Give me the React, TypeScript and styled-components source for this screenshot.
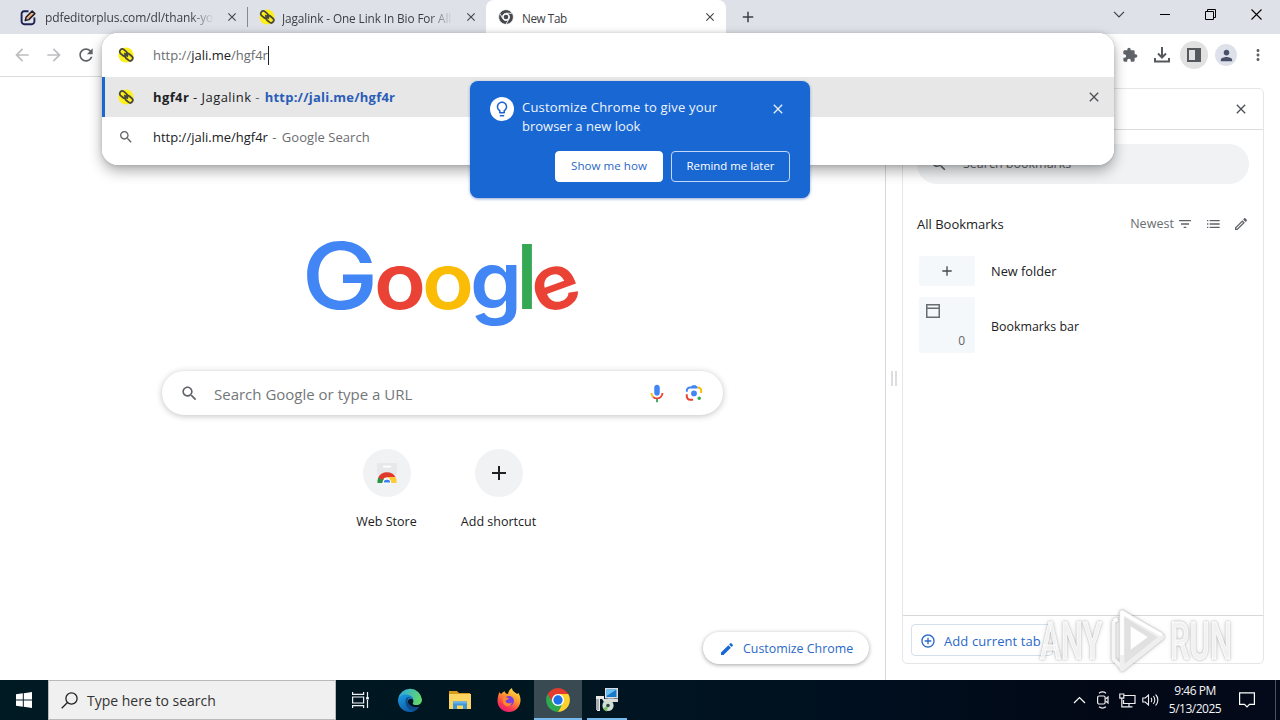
import React from "react";
import styled, { createGlobalStyle } from "styled-components";

const GlobalStyle = createGlobalStyle`
  * { box-sizing: border-box; }
  body { margin: 0; overflow: hidden; background: #fff; font-family: "Open Sans", "Noto Sans", sans-serif; }
  svg { display: block; flex: none; }
`;

const PATHS = {
  search:
    "M15.5 14h-.79l-.28-.27C15.41 12.59 16 11.11 16 9.5 16 5.91 13.09 3 9.5 3S3 5.91 3 9.5 5.91 16 9.5 16c1.61 0 3.09-.59 4.23-1.57l.27.28v.79l5 4.99L20.49 19l-4.99-5zm-6 0C7.01 14 5 11.99 5 9.5S7.01 5 9.5 5 14 7.01 14 9.5 11.99 14 9.5 14z",
  back: "M20 11H7.83l5.59-5.59L12 4l-8 8 8 8 1.41-1.41L7.83 13H20v-2z",
  forward: "M4 13h12.17l-5.59 5.59L12 20l8-8-8-8-1.41 1.41L16.17 11H4v2z",
  refresh:
    "M17.65 6.35C16.2 4.9 14.21 4 12 4c-4.42 0-7.99 3.58-7.99 8s3.57 8 7.99 8c3.73 0 6.84-2.55 7.73-6h-2.08c-.82 2.33-3.04 4-5.65 4-3.31 0-6-2.69-6-6s2.69-6 6-6c1.66 0 3.14.69 4.22 1.78L13 11h7V4l-2.35 2.35z",
  close:
    "M19 6.41L17.59 5 12 10.59 6.41 5 5 6.41 10.59 12 5 17.59 6.41 19 12 13.41 17.59 19 19 17.59 13.41 12z",
  add: "M19 13h-6v6h-2v-6H5v-2h6V5h2v6h6v2z",
  extension:
    "M20.5 11H19V7c0-1.1-.9-2-2-2h-4V3.5C13 2.12 11.88 1 10.5 1S8 2.12 8 3.5V5H4c-1.1 0-1.99.9-1.99 2v3.8H3.5c1.49 0 2.7 1.21 2.7 2.7s-1.21 2.7-2.7 2.7H2V20c0 1.1.9 2 2 2h3.8v-1.5c0-1.49 1.21-2.7 2.7-2.7 1.49 0 2.7 1.21 2.7 2.7V22H17c1.1 0 2-.9 2-2v-4h1.5c1.38 0 2.5-1.12 2.5-2.5S21.88 11 20.5 11z",
  person:
    "M12 12c2.21 0 4-1.79 4-4s-1.79-4-4-4-4 1.79-4 4 1.79 4 4 4zm0 2c-2.67 0-8 1.34-8 4v2h16v-2c0-2.66-5.33-4-8-4z",
  more: "M12 8c1.1 0 2-.9 2-2s-.9-2-2-2-2 .9-2 2 .9 2 2 2zm0 2c-1.1 0-2 .9-2 2s.9 2 2 2 2-.9 2-2-.9-2-2-2zm0 6c-1.1 0-2 .9-2 2s.9 2 2 2 2-.9 2-2-.9-2-2-2z",
  bulb: "M9 21c0 .55.45 1 1 1h4c.55 0 1-.45 1-1v-1H9v1zm3-19C8.14 2 5 5.14 5 9c0 2.38 1.19 4.47 3 5.74V17c0 .55.45 1 1 1h6c.55 0 1-.45 1-1v-2.26c1.81-1.27 3-3.36 3-5.74 0-3.86-3.14-7-7-7zm2.85 11.1l-.85.6V16h-4v-2.3l-.85-.6C7.8 12.16 7 10.63 7 9c0-2.76 2.24-5 5-5s5 2.24 5 5c0 1.63-.8 3.16-2.15 4.1z",
  edit: "M3 17.25V21h3.75L17.81 9.94l-3.75-3.75L3 17.25zM20.71 7.04c.39-.39.39-1.02 0-1.41l-2.34-2.34c-.39-.39-1.02-.39-1.41 0l-1.83 1.83 3.75 3.75 1.83-1.83z",
  editOutline:
    "M14.06 9.02l.92.92L5.92 19H5v-.92l9.06-9.06M17.66 3c-.25 0-.51.1-.7.29l-1.83 1.83 3.75 3.75 1.83-1.83c.39-.39.39-1.02 0-1.41l-2.34-2.34c-.2-.2-.45-.29-.71-.29zm-3.6 3.19L3 17.25V21h3.75L17.81 9.94l-3.75-3.75z",
  addCircle:
    "M13 7h-2v4H7v2h4v4h2v-4h4v-2h-4V7zm-1-5C6.48 2 2 6.48 2 12s4.48 10 10 10 10-4.48 10-10S17.52 2 12 2zm0 18c-4.41 0-8-3.59-8-8s3.59-8 8-8 8 3.59 8 8-3.59 8-8 8z",
  sort: "M10 18h4v-2h-4v2zM3 6v2h18V6H3zm3 7h12v-2H6v2z",
  list: "M3 8h2V6H3v2zm0 5h2v-2H3v2zm0 5h2v-2H3v2zM7 6v2h15V6H7zm0 7h15v-2H7v2zm0 5h15v-2H7v2z",
};

const Icon = ({ name, size, color = "#5f6368" }: { name: keyof typeof PATHS; size: number; color?: string }) => (
  <svg width={size} height={size} viewBox="0 0 24 24" fill={color}>
    <path d={PATHS[name]} />
  </svg>
);

const Text = styled.span<{ $size?: number; $color?: string; $ls?: number; $bold?: boolean }>`
  font-size: ${(p) => p.$size ?? 13}px;
  color: ${(p) => p.$color ?? "#202124"};
  letter-spacing: ${(p) => p.$ls ?? 0}px;
  font-weight: ${(p) => (p.$bold ? 700 : 400)};
  line-height: 20px;
  white-space: pre;
`;

const Screen = styled.div`
  position: relative;
  width: 1280px;
  height: 720px;
  overflow: hidden;
  display: flex;
  flex-direction: column;
`;

/* ---------- tab strip ---------- */
const TabStrip = styled.div`
  height: 34px;
  flex: none;
  display: flex;
  background: #dee1e8;
`;
const Tab = styled.div<{ $width: number; $pad: number; $active?: boolean }>`
  width: ${(p) => p.$width}px;
  padding-left: ${(p) => p.$pad}px;
  height: 34px;
  display: flex;
  align-items: center;
  background: ${(p) => (p.$active ? "#fff" : "transparent")};
  border-radius: 8px 8px 0 0;
`;
const TabTitle = styled.div<{ $width: number; $fade?: boolean; $gap?: number }>`
  width: ${(p) => p.$width}px;
  margin-left: ${(p) => p.$gap ?? 8}px;
  overflow: hidden;
  white-space: nowrap;
  line-height: 20px;
  mask-image: ${(p) => (p.$fade ? "linear-gradient(90deg, #000 calc(100% - 24px), transparent)" : "none")};
`;
const TabClose = styled.div`
  margin-left: 11px;
`;
const TabDivider = styled.div`
  width: 1px;
  height: 20px;
  margin-top: 7px;
  background: #868a90;
`;
const NewTabButton = styled.div`
  width: 44px;
  display: grid;
  place-items: center;
`;
const WindowControls = styled.div`
  margin-left: auto;
  height: 29px;
  display: flex;
`;
const WindowButton = styled.div`
  width: 46px;
  display: grid;
  place-items: center;
`;

/* ---------- toolbar ---------- */
const Toolbar = styled.div`
  height: 42px;
  flex: none;
  display: flex;
  align-items: center;
  justify-content: space-between;
  padding: 0 6px;
  background: #fff;
`;
const ToolGroup = styled.div`
  display: flex;
  align-items: center;
`;
const ToolSlot = styled.div`
  width: 32px;
  display: grid;
  place-items: center;
`;
const RoundBadge = styled.div<{ $size: number; $bg: string }>`
  width: ${(p) => p.$size}px;
  height: ${(p) => p.$size}px;
  border-radius: 50%;
  background: ${(p) => p.$bg};
  display: grid;
  place-items: center;
`;

/* ---------- omnibox popup ---------- */
const PopupShadow = styled.div`
  position: absolute;
  left: 102px;
  top: 33px;
  width: 1012px;
  height: 132px;
  border-radius: 16px;
  box-shadow: 0 6px 14px rgba(0, 0, 0, 0.32), 0 0 4px rgba(0, 0, 0, 0.16);
`;
const Popup = styled.div`
  height: 132px;
  border-radius: 16px;
  background: #fff;
  overflow: hidden;
`;
const PopupRow = styled.div<{ $height: number; $selected?: boolean }>`
  height: ${(p) => p.$height}px;
  display: flex;
  align-items: center;
  padding: 0 12px 0 12px;
  border-left: 3px solid ${(p) => (p.$selected ? "#1967d2" : "transparent")};
  background: ${(p) => (p.$selected ? "#e7e7e7" : "#fff")};
`;
const PopupIcon = styled.div`
  width: 36px;
  display: flex;
`;
const SmallPopupIcon = styled(PopupIcon)`
  padding-left: 1px;
`;
const Caret = styled.div`
  width: 1px;
  height: 19px;
  background: #202124;
`;
const RowEnd = styled.div`
  margin-left: auto;
`;

/* ---------- promo bubble ---------- */
const Bubble = styled.div`
  position: absolute;
  left: 470px;
  top: 81px;
  width: 340px;
  height: 117px;
  padding: 16px 20px 16px;
  border-radius: 8px;
  background: #1967d2;
  box-shadow: 0 1px 3px rgba(25, 80, 170, 0.5);
  display: flex;
  flex-direction: column;
  justify-content: space-between;
`;
const BubbleTop = styled.div`
  display: flex;
`;
const BubbleMessage = styled.div`
  width: 248px;
  margin-left: 8px;
  padding-top: 1px;
  display: flex;
  flex-direction: column;
  & > span { line-height: 19px; }
`;
const BubbleClose = styled.div`
  padding-top: 4px;
`;
const BubbleActions = styled.div`
  display: flex;
  justify-content: flex-end;
  gap: 8px;
`;
const BubbleButton = styled.div<{ $width: number; $filled?: boolean }>`
  width: ${(p) => p.$width}px;
  height: 31px;
  padding-bottom: 1px;
  border-radius: 4px;
  border: 1px solid ${(p) => (p.$filled ? "#fff" : "#c3d8f7")};
  background: ${(p) => (p.$filled ? "#fff" : "transparent")};
  display: flex;
  align-items: center;
  justify-content: center;
`;

/* ---------- new tab page ---------- */
const Body = styled.div`
  height: 604px;
  flex: none;
  display: flex;
`;
const NewTabPage = styled.div`
  width: 886px;
  border-top: 1px solid #dadce0;
  border-right: 1px solid #d6d8dc;
  display: flex;
  flex-direction: column;
  align-items: center;
`;
const LogoBox = styled.div`
  margin-top: 148px;
  height: 120px;
  & > svg { overflow: visible; }
`;
const SearchBox = styled.div`
  width: 561px;
  height: 44px;
  margin-top: 26px;
  padding: 0 20px 0 18px;
  border-radius: 22px;
  background: #fff;
  box-shadow: 0 1px 6px rgba(32, 33, 36, 0.28);
  display: flex;
  align-items: center;
`;
const SearchHint = styled.div`
  flex: 1;
  margin-left: 15px;
  padding-top: 2px;
`;
const SearchTools = styled.div`
  display: flex;
  align-items: center;
  gap: 17px;
`;
const Shortcuts = styled.div`
  display: flex;
  margin-top: 34px;
`;
const Shortcut = styled.div`
  width: 112px;
  display: flex;
  flex-direction: column;
  align-items: center;
  gap: 15px;
`;
const CustomizeButton = styled.div`
  align-self: flex-end;
  margin: auto 16px 16px 0;
  width: 166px;
  height: 32px;
  padding: 2px 0 0 16px;
  border-radius: 16px;
  background: #fff;
  box-shadow: 0 1px 4px rgba(0, 0, 0, 0.36);
  display: flex;
  align-items: center;
  gap: 8px;
`;

/* ---------- side panel ---------- */
const ResizeGutter = styled.div`
  width: 16px;
  display: flex;
  align-items: center;
  justify-content: center;
  gap: 2px;
`;
const GripBar = styled.div`
  width: 2px;
  height: 15px;
  background: #dcdde0;
`;
const SideCard = styled.div`
  width: 362px;
  height: 576px;
  margin-top: 12px;
  border: 1px solid #e4e6e9;
  border-radius: 5px;
  display: flex;
  flex-direction: column;
`;
const SideHeader = styled.div`
  height: 41px;
  border-bottom: 1px solid #dadce0;
  display: flex;
  align-items: center;
  justify-content: flex-end;
  padding-right: 14px;
`;
const SideSearch = styled.div`
  margin: 14px 14px 0;
  height: 40px;
  border-radius: 20px;
  background: #f0f2f4;
  display: flex;
  align-items: center;
  gap: 15px;
  padding-left: 13px;
`;
const SideToolbar = styled.div`
  height: 20px;
  margin: 30px 14px 0;
  display: flex;
  align-items: center;
`;
const SideActions = styled.div`
  margin-left: auto;
  display: flex;
  align-items: center;
`;
const ActionIcon = styled.div<{ $gap: number }>`
  margin-left: ${(p) => p.$gap}px;
`;
const FolderRow = styled.div<{ $top: number }>`
  margin: ${(p) => p.$top}px 0 0 16px;
  display: flex;
  align-items: center;
  gap: 16px;
`;
const FolderName = styled.div`
  padding-top: 3px;
  display: flex;
`;
const Thumb = styled.div<{ $height: number }>`
  width: 56px;
  height: ${(p) => p.$height}px;
  border-radius: 2px;
  background: #f5f8fb;
  display: flex;
  flex-direction: column;
  justify-content: center;
  align-items: center;
`;
const FolderThumb = styled(Thumb)`
  justify-content: space-between;
  align-items: stretch;
  padding: 7px 10px 3px 7px;
`;
const Count = styled.div`
  text-align: right;
  height: 20px;
  line-height: 18px;
`;
const SideFooter = styled.div`
  margin-top: auto;
  height: 48px;
  border-top: 1px solid #d6d8dc;
  padding: 8px;
`;
const AddTabButton = styled.div`
  width: 142px;
  height: 32px;
  border: 1px solid #d4e0ea;
  border-radius: 4px;
  padding: 1px 0 0 8px;
  display: flex;
  align-items: center;
  gap: 8px;
`;
const Watermark = styled.svg`
  position: absolute;
  left: 1030px;
  top: 602px;
  overflow: visible;
  filter: drop-shadow(0 0 1px rgba(0, 0, 0, 0.26)) drop-shadow(0 0 2px rgba(0, 0, 0, 0.16));
`;

/* ---------- taskbar ---------- */
const Taskbar = styled.div`
  height: 40px;
  flex: none;
  display: flex;
  background: linear-gradient(90deg, #001a24 0%, #001621 45%, #000f1f 68%, #020816 86%, #050a1a 100%);
`;
const StartButton = styled.div`
  width: 48px;
  display: grid;
  place-items: center;
`;
const TaskSearch = styled.div`
  width: 288px;
  background: #f0f0f0;
  border: 1px solid #b7b9ba;
  display: flex;
  align-items: center;
  padding: 1px 0 0 12px;
  gap: 9px;
`;
const TaskItem = styled.div<{ $width?: number; $active?: boolean }>`
  width: ${(p) => p.$width ?? 49}px;
  display: grid;
  place-items: center;
  background: ${(p) => (p.$active ? "#3a4a52" : "transparent")};
`;
const RunningItem = styled(TaskItem)<{ $inset: number }>`
  background-image: linear-gradient(#76b9ed, #76b9ed);
  background-size: calc(100% - ${(p) => p.$inset}px) 2px;
  background-position: 50% 100%;
  background-repeat: no-repeat;
`;
const Tray = styled.div`
  margin-left: auto;
  display: flex;
  align-items: center;
`;
const TrayItem = styled.div<{ $width: number }>`
  width: ${(p) => p.$width}px;
  display: grid;
  place-items: center;
`;
const Clock = styled.div`
  width: 68px;
  display: flex;
  flex-direction: column;
  align-items: center;
  & > span { line-height: 18px; }
`;
const ShowDesktop = styled.div`
  width: 5px;
  height: 40px;
  margin-left: 11px;
  border-left: 1px solid #4b505c;
`;

/* ---------- logos ---------- */
const JagaIcon = () => (
  <svg width="18" height="18" viewBox="0 0 18 18">
    <circle cx="9" cy="9" r="7.6" fill="#fdf01a" />
    <g transform="rotate(40 9 9)" fill="none" stroke="#4a4838" strokeWidth="1.8">
      <rect x="1.4" y="6.2" width="8.2" height="5.2" rx="2.6" />
      <rect x="8.6" y="6.2" width="8.2" height="5.2" rx="2.6" />
      <path d="M6.5 8.8h5" />
    </g>
  </svg>
);

const PdfIcon = () => (
  <svg width="17" height="17" viewBox="0 0 17 17" fill="none">
    <path d="M8.5 2.2H4A2.6 2.6 0 0 0 1.6 5v7.6A2.6 2.6 0 0 0 4.2 15.2h7.6a2.6 2.6 0 0 0 2.6-2.6V8.5" stroke="#1d2055" strokeWidth="1.9" />
    <path d="M5.2 11.6l1-3.6 6-6 2.6 2.6-6 6z" fill="#f3b27c" stroke="#1d1a2b" strokeWidth="1.5" strokeLinejoin="round" />
  </svg>
);

const ChromeMark = ({ size, mono }: { size: number; mono?: boolean }) => (
  <svg width={size} height={size} viewBox="0 0 48 48">
    <circle cx="24" cy="24" r="14" fill="#fff" />
    <g stroke={mono ? "#fff" : "none"} strokeWidth="2">
      <path d="M4.95 13A22 22 0 0 1 43.05 13H24A11 11 0 0 0 14.47 29.5Z" fill={mono ? "#45484c" : "#e33b2e"} />
      <path d="M4.95 13L14.47 29.5A11 11 0 0 0 33.53 29.5L24 46A22 22 0 0 1 4.95 13Z" fill={mono ? "#45484c" : "#2da94f"} />
      <path d="M43.05 13A22 22 0 0 1 24 46L33.53 29.5A11 11 0 0 0 24 13Z" fill={mono ? "#45484c" : "#fdd22f"} />
    </g>
    <circle cx="24" cy="24" r={mono ? 7 : 8.6} fill={mono ? "#45484c" : "#1a73e8"} />
  </svg>
);

const GoogleWordmark = () => (
  <svg width="290" height="120" viewBox="297 225 290 120" fontFamily="Inter, sans-serif" fontSize="77" fontWeight="600">
    <text y="309" fill="#4285f4" x="300.500" fontSize="92" fontWeight="500" textLength="77" lengthAdjust="spacingAndGlyphs">G</text>
    <text y="309" fill="#ea4335" x="373" textLength="52" lengthAdjust="spacingAndGlyphs">o</text>
    <text y="309" fill="#fbbc05" x="421" textLength="52" lengthAdjust="spacingAndGlyphs">o</text>
    <text y="309" fill="#4285f4" x="469" fontSize="80" textLength="52" lengthAdjust="spacingAndGlyphs">g</text>
    <text y="309" fill="#34a853" x="514.500" fontSize="89" fontWeight="500" textLength="23" lengthAdjust="spacingAndGlyphs">l</text>
    <text y="309" fill="#ea4335" x="530.500" textLength="48" lengthAdjust="spacingAndGlyphs" transform="rotate(-20 554.500 288)">e</text>
  </svg>
);

const MicIcon = () => (
  <svg width="22" height="22" viewBox="0 0 24 24">
    <path d="M12 15c1.66 0 3-1.31 3-2.97V5.97C15 4.31 13.66 3 12 3S9 4.31 9 5.97v6.06C9 13.69 10.34 15 12 15z" fill="#4285f4" />
    <path d="M11 18.08h2v3.92h-2z" fill="#34a853" />
    <path d="M7.05 16.87C5.78 15.58 5 13.93 5 12h2c0 1.45.56 2.42 1.47 3.38z" fill="#fbbc04" />
    <path d="M12 16.93c-1.38 0-2.63-.57-3.54-1.47l-1.41 1.41A6.99 6.99 0 0 0 12 18.95 7 7 0 0 0 19 12h-2c0 2.76-2.24 4.93-5 4.93z" fill="#ea4335" />
  </svg>
);

const LensIcon = () => (
  <svg width="18" height="18" viewBox="0 0 20 20" fill="none" strokeWidth="2.2">
    <path d="M2 8.500V7.500A3.500 3.500 0 0 1 5.500 4H14" stroke="#4285f4" />
    <path d="M6 4l2-2.600h4L14 4z" fill="#4285f4" />
    <path d="M14 4h.5A3.500 3.500 0 0 1 18 7.500V10" stroke="#fbbc04" />
    <path d="M2 11.500V14a3.500 3.500 0 0 0 3.500 3.500H9" stroke="#ea4335" />
    <circle cx="10" cy="10.500" r="3.200" fill="#4285f4" />
    <circle cx="15.800" cy="15.800" r="1.900" fill="#34a853" />
  </svg>
);

const WebStoreIcon = () => (
  <svg width="24" height="24" viewBox="0 0 24 24">
    <path d="M2 2h20v12H2z" fill="#e6e8ea" />
    <path d="M8.500 5.600h7" stroke="#fff" strokeWidth="1.600" strokeLinecap="round" />
    <path d="M2.500 22a9.500 9.500 0 0 1 3-8L9 18a5 5 0 0 0-1.500 4z" fill="#2b9348" />
    <path d="M3.300 16.200a10 10 0 0 1 17.400 0H12a6 6 0 0 0-5 2.800z" fill="#e0392b" />
    <path d="M12 16.200h8.700a9.500 9.500 0 0 1 .8 5.800H16a6 6 0 0 0-4-5.800z" fill="#fdcc33" />
    <path d="M8 22a4 4 0 0 1 8 0z" fill="#3e7ff0" stroke="#fff" strokeWidth="1" />
  </svg>
);

const EdgeIcon = () => (
  <svg width="26" height="26" viewBox="0 0 26 26">
    <defs>
      <linearGradient id="edgeTop" x1="0" x2="1" y1="0.2" y2="0.5">
        <stop offset="0" stopColor="#2fa8e0" />
        <stop offset="1" stopColor="#63d86c" />
      </linearGradient>
      <linearGradient id="edgeLow" x1="0" x2="0.6" y1="0" y2="1">
        <stop offset="0" stopColor="#1c9de2" />
        <stop offset="1" stopColor="#0c59a4" />
      </linearGradient>
    </defs>
    <path d="M1.2 12A12 12 0 0 1 25 12.5c0 3.6-2.5 5.6-5.6 5.6-2.6 0-4.1-.9-3.6-1.9 1.4-2 .6-5.6-3.6-6.2C7 9.200 2 10 1.200 12z" fill="url(#edgeTop)" />
    <path d="M1 13C1.300 9.500 4.800 7.500 8.500 7.500c4.500 0 7.800 2.300 7.800 5.500-1.500-2.200-5.500-1.600-5.500 2 0 4 5 7.200 11.200 4.800C19.500 24 16 25.200 13 25 6 25 1 19.500 1 13z" fill="url(#edgeLow)" />
    <path d="M8.500 13.500c.3-3 3-4 5-3.300-3 .5-3.500 3.500-2.300 5.800C13 19.500 18 21 22 19.800c-1.800 2.800-4.300 3.600-6.600 3.500-4.500-.2-7.300-5-6.900-9.800z" fill="#114a8b" />
  </svg>
);

const FolderIcon = () => (
  <svg width="24" height="22" viewBox="0 0 24 22">
    <path d="M1 2h8l2 2h11v5H1z" fill="#d99a1c" />
    <path d="M1 5h22v15H1z" fill="#fcd462" />
    <path d="M5 20v-7.500h14V20h-4v-3.500H9V20z" fill="#3f97d8" />
    <path d="M5 12.500h14v2H5z" fill="#63b3ea" />
  </svg>
);

const FirefoxIcon = () => (
  <svg width="26" height="26" viewBox="0 0 26 26">
    <defs>
      <linearGradient id="fox" x1="0.8" x2="0.25" y1="0" y2="1">
        <stop offset="0" stopColor="#ffe847" />
        <stop offset="0.4" stopColor="#ff9a2e" />
        <stop offset="0.75" stopColor="#fb3b4e" />
        <stop offset="1" stopColor="#e3197d" />
      </linearGradient>
    </defs>
    <path d="M3.500 5c.5 1 1 1.500 1.800 2C6.500 5 8 4.500 9 4.500 9 6 10 7 12 7c.5-3 2-5 4-6 0 3 3 4 5 6 1-.3 1-1 1-1.600C24 8 24.700 11 24.500 14 24 20.500 19 25 13 25S1.500 20.500 1.500 14c0-3.500.8-6.500 2-9z" fill="url(#fox)" />
    <circle cx="13" cy="14" r="5" fill="#7a3fe0" />
    <path d="M7 11c2-1.500 4-.5 6 .5-1 1.500-3 1.200-3.500 2.500.5 2.500 4 3 6.500 1.500C15 19 12 20 10 19c-3-1.500-4-5-3-8z" fill="#ff8a2b" />
  </svg>
);

const InstallerIcon = () => (
  <svg width="26" height="28" viewBox="0 0 26 28">
    <path d="M11 2h13v10.500H11z" fill="#d8dde2" />
    <path d="M12.500 3.500h10v7.500h-10z" fill="#1a78c8" />
    <path d="M12.500 3.500h10l-10 6.500z" fill="#69c0f2" />
    <path d="M14 12.500h6l2 3H12z" fill="#cfd4d8" />
    <path d="M2 10h8v3H6v12H3V13H2z" fill="#e9e9e9" />
    <path d="M2 13h3v11H2z" fill="#a9adb0" />
    <path d="M8 13h16v3H10z" fill="#dcdcdc" />
    <circle cx="14" cy="19.500" r="5.600" fill="#cfe0d2" />
    <path d="M14 19.500l-5 3a6 6 0 0 0 4 3z" fill="#7fbf6a" />
    <circle cx="14" cy="19.500" r="1.800" fill="#33434c" />
  </svg>
);

export default function App() {
  return (
    <>
      <GlobalStyle />
      <Screen>
        <TabStrip>
          <Tab $width={247} $pad={20}>
            <PdfIcon />
            <TabTitle $width={169} $fade>
              <Text $size={12} $color="#3c4043" $ls={-0.1}>pdfeditorplus.com/dl/thank-you</Text>
            </TabTitle>
            <TabClose><Icon name="close" size={14} color="#45484c" /></TabClose>
          </Tab>
          <TabDivider />
          <Tab $width={238} $pad={10}>
            <JagaIcon />
            <TabTitle $width={171} $gap={6} $fade>
              <Text $size={11.8} $color="#3c4043" $ls={-0.1}>Jagalink - One Link In Bio For All</Text>
            </TabTitle>
            <TabClose><Icon name="close" size={14} color="#45484c" /></TabClose>
          </Tab>
          <Tab $width={240} $pad={12} $active>
            <ChromeMark size={16} mono />
            <TabTitle $width={170}>
              <Text $size={11.7} $color="#3c4043" $ls={-0.4}>New Tab</Text>
            </TabTitle>
            <TabClose><Icon name="close" size={14} color="#45484c" /></TabClose>
          </Tab>
          <NewTabButton><Icon name="add" size={18} color="#3c4043" /></NewTabButton>
          <WindowControls>
            <WindowButton>
              <svg width="12" height="7" viewBox="0 0 12 7" fill="none" stroke="#3c4043" strokeWidth="1.2"><path d="M1 .8l5 5 5-5" /></svg>
            </WindowButton>
            <WindowButton>
              <svg width="10" height="2" viewBox="0 0 10 2"><path d="M0 0h10v1H0z" fill="#000" /></svg>
            </WindowButton>
            <WindowButton>
              <svg width="12" height="11" viewBox="0 0 12 11" fill="none" stroke="#000"><path d="M.5 2.500h8v8h-8zM2.500 2.500v-2h8v8h-2" /></svg>
            </WindowButton>
            <WindowButton>
              <svg width="12" height="11" viewBox="0 0 12 11" stroke="#000" strokeWidth="1.100"><path d="M.5.5l10 10M10.500.5l-10 10" /></svg>
            </WindowButton>
          </WindowControls>
        </TabStrip>

        <Toolbar>
          <ToolGroup>
            <ToolSlot><Icon name="back" size={20} color="#bcbec1" /></ToolSlot>
            <ToolSlot><Icon name="forward" size={20} color="#bcbec1" /></ToolSlot>
            <ToolSlot><Icon name="refresh" size={20} /></ToolSlot>
          </ToolGroup>
          <ToolGroup>
            <ToolSlot><Icon name="extension" size={16} /></ToolSlot>
            <ToolSlot>
              <svg width="16" height="16" viewBox="0 0 16 16" fill="none" stroke="#55595e" strokeWidth="2">
                <path d="M8 0v10M4 6.500l4 4 4-4M1 11v3.500h14V11" />
              </svg>
            </ToolSlot>
            <ToolSlot>
              <RoundBadge $size={28} $bg="#e1e1e1">
                <svg width="14" height="14" viewBox="0 0 14 14"><path d="M0 0h14v14H0zM2 2v10h6V2z" fill="#55595e" fillRule="evenodd" /></svg>
              </RoundBadge>
            </ToolSlot>
            <ToolSlot>
              <RoundBadge $size={22} $bg="#dee1ea"><Icon name="person" size={17} color="#4a5068" /></RoundBadge>
            </ToolSlot>
            <ToolSlot><Icon name="more" size={18} /></ToolSlot>
          </ToolGroup>
        </Toolbar>

        <Body>
          <NewTabPage>
            <LogoBox><GoogleWordmark /></LogoBox>
            <SearchBox>
              <Icon name="search" size={19} />
              <SearchHint><Text $size={15} $color="#74777a">Search Google or type a URL</Text></SearchHint>
              <SearchTools>
                <MicIcon />
                <LensIcon />
              </SearchTools>
            </SearchBox>
            <Shortcuts>
              <Shortcut>
                <RoundBadge $size={48} $bg="#f0f2f4"><WebStoreIcon /></RoundBadge>
                <Text $size={12.5}>Web Store</Text>
              </Shortcut>
              <Shortcut>
                <RoundBadge $size={48} $bg="#f0f2f4"><Icon name="add" size={24} color="#202124" /></RoundBadge>
                <Text $size={12.5}>Add shortcut</Text>
              </Shortcut>
            </Shortcuts>
            <CustomizeButton>
              <Icon name="edit" size={16} color="#1967d2" />
              <Text $size={12.4} $color="#2a69c8">Customize Chrome</Text>
            </CustomizeButton>
          </NewTabPage>

          <ResizeGutter><GripBar /><GripBar /></ResizeGutter>
          <SideCard>
            <SideHeader><Icon name="close" size={16} color="#4d5156" /></SideHeader>
            <SideSearch>
              <Icon name="search" size={18} />
              <Text $size={12.5} $color="#5f6368">Search bookmarks</Text>
            </SideSearch>
            <SideToolbar>
              <Text>All Bookmarks</Text>
              <SideActions>
                <Text $size={12.5} $color="#6a6d70" $ls={0.05}>Newest</Text>
                <ActionIcon $gap={3}><Icon name="sort" size={16} /></ActionIcon>
                <ActionIcon $gap={12}><Icon name="list" size={16} /></ActionIcon>
                <ActionIcon $gap={12}><Icon name="editOutline" size={16} /></ActionIcon>
              </SideActions>
            </SideToolbar>
            <FolderRow $top={22}>
              <Thumb $height={30}><Icon name="add" size={16} color="#45484c" /></Thumb>
              <Text $size={12.8}>New folder</Text>
            </FolderRow>
            <FolderRow $top={11}>
              <FolderThumb $height={56}>
                <svg width="14" height="14" viewBox="0 0 14 14" fill="none" stroke="#6a6d70" strokeWidth="1.500"><path d="M.75.75h12.500v12.500H.75zM.75 4.200h12.500" /></svg>
                <Count><Text $size={12} $color="#5f6368">0</Text></Count>
              </FolderThumb>
              <FolderName><Text $size={12.400}>Bookmarks bar</Text></FolderName>
            </FolderRow>
            <SideFooter>
              <AddTabButton>
                <Icon name="addCircle" size={16} color="#2a69c8" />
                <Text $color="#2a69c8" $ls={0.1}>Add current tab</Text>
              </AddTabButton>
            </SideFooter>
          </SideCard>
        </Body>

        <Taskbar>
          <StartButton>
            <svg width="16" height="16" viewBox="0 0 16 16" fill="#fff"><path d="M0 2.300L6.800 1.300V7.500H0zM7.800 1.200L16 0v7.500H7.800zM0 8.500h6.800v6.200L0 13.700zM7.800 8.500H16V16l-8.200-1.200z" /></svg>
          </StartButton>
          <TaskSearch>
            <svg width="17" height="17" viewBox="0 0 17 17" fill="none" stroke="#222" strokeWidth="1.300"><circle cx="10.500" cy="6.500" r="5.600" /><path d="M6.500 10.500L.7 16.300" /></svg>
            <Text $size={14} $color="#333">Type here to search</Text>
          </TaskSearch>
          <TaskItem $width={48}>
            <svg width="17" height="16" viewBox="0 0 17 16" fill="none" stroke="#eef2f4" strokeWidth="1.200"><path d="M.6 0v2.400h11V0M.6 5h11v6H.6zM.6 16v-2.400h11V16M15.500 0v5M15.500 8v8" /><path d="M14.200 5h2.600v2.500h-2.600z" fill="#fff" stroke="none" /></svg>
          </TaskItem>
          <TaskItem $width={52}><EdgeIcon /></TaskItem>
          <TaskItem $width={47}><FolderIcon /></TaskItem>
          <TaskItem $width={51}><FirefoxIcon /></TaskItem>
          <RunningItem $width={48} $active $inset={0}><ChromeMark size={26} /></RunningItem>
          <RunningItem $width={50} $inset={10}><InstallerIcon /></RunningItem>
          <Tray>
            <TrayItem $width={24}>
              <svg width="13" height="8" viewBox="0 0 13 8" fill="none" stroke="#fff" strokeWidth="1.200"><path d="M1 7l5.500-5.500L12 7" /></svg>
            </TrayItem>
            <TrayItem $width={24}>
              <svg width="14" height="18" viewBox="0 0 14 18" fill="none" stroke="#eee" strokeWidth="1.200"><rect x="1.600" y="5" width="7.500" height="8" rx="1.500" /><path d="M9.500 8l2.500-2v6l-2.500-2M3 2.200C5 .8 8 .8 10 2.200M3 15.800c2 1.400 5 1.400 7 0" /></svg>
            </TrayItem>
            <TrayItem $width={24}>
              <svg width="17" height="15" viewBox="0 0 17 15" fill="none" stroke="#eee" strokeWidth="1.200"><path d="M5 2.500h11v8H4.500V7M10 10.500v3M6.500 13.800h7M.8 1h4v4.200h-4zM2.800 5v8.800h4" /></svg>
            </TrayItem>
            <TrayItem $width={22}>
              <svg width="17" height="14" viewBox="0 0 17 14" fill="none" stroke="#eee" strokeWidth="1.100"><path d="M.8 5h2.500L6.500 2v10L3.300 9H.8zM9 5c1 1 1 3 0 4M11.300 3.200c2 2 2 5.600 0 7.600M13.600 1.500c3 3 3 8 0 11" /></svg>
            </TrayItem>
            <Clock>
              <Text $size={12} $color="#f2f4f6" $ls={-0.5}>9:46 PM</Text>
              <Text $size={12} $color="#f2f4f6" $ls={-0.5}>5/13/2025</Text>
            </Clock>
            <TrayItem $width={35}>
              <svg width="16" height="16" viewBox="0 0 16 16" fill="none" stroke="#fff" strokeWidth="1.200"><path d="M.6.8h14.800v11.500h-4.900L8 14.800l-2.500-2.500H.6z" /></svg>
            </TrayItem>
            <ShowDesktop />
          </Tray>
        </Taskbar>

        <PopupShadow>
          <Popup>
            <PopupRow $height={44}>
              <PopupIcon><JagaIcon /></PopupIcon>
              <Text $color="#6a6d70">http://</Text>
              <Text>jali.me</Text>
              <Text $color="#6a6d70">/hgf4r</Text>
              <Caret />
            </PopupRow>
            <PopupRow $height={40} $selected>
              <PopupIcon><JagaIcon /></PopupIcon>
              <Text $bold $ls={0.4}>hgf4r</Text>
              <Text $ls={0.45}> - Jagalink </Text>
              <Text $color="#5f6368" $ls={0.9}>- </Text>
              <Text $bold $color="#2a5db8" $ls={0.22}>http://jali.me/hgf4r</Text>
              <RowEnd><Icon name="close" size={16} color="#4d5156" /></RowEnd>
            </PopupRow>
            <PopupRow $height={40}>
              <SmallPopupIcon><Icon name="search" size={16} /></SmallPopupIcon>
              <Text>http://jali.me/hgf4r</Text>
              <Text $color="#6a6d70" $ls={1}> - </Text>
              <Text $color="#6a6d70" $ls={0.05}>Google Search</Text>
            </PopupRow>
          </Popup>
        </PopupShadow>

        <Bubble>
          <BubbleTop>
            <RoundBadge $size={24} $bg="#fff"><Icon name="bulb" size={18} color="#1967d2" /></RoundBadge>
            <BubbleMessage>
              <Text $color="#eef4fd" $ls={0.19}>Customize Chrome to give your</Text>
              <Text $color="#eef4fd">browser a new look</Text>
            </BubbleMessage>
            <BubbleClose><Icon name="close" size={16} color="#e6effc" /></BubbleClose>
          </BubbleTop>
          <BubbleActions>
            <BubbleButton $width={108} $filled><Text $size={11.6} $color="#2a69c8">Show me how</Text></BubbleButton>
            <BubbleButton $width={119}><Text $size={11.4} $color="#fff">Remind me later</Text></BubbleButton>
          </BubbleActions>
        </Bubble>

        <Watermark width="210" height="76" viewBox="1030 602 210 76" fontFamily="Roboto, sans-serif" fontWeight="500" fontSize="52">
          <g fill="#fff" fillOpacity="0.8" stroke="#fff" strokeWidth="0.8">
            <text x="1040" y="659" textLength="62" lengthAdjust="spacingAndGlyphs">ANY</text>
            <text x="1170" y="659" textLength="62" lengthAdjust="spacingAndGlyphs">RUN</text>
          </g>
          <g fill="none" strokeLinejoin="round">
            <path d="M1113.500 621v38l9 9" stroke="#f6f6f6" strokeWidth="4" />
            <path d="M1113.500 621l4-2" stroke="#fff" strokeWidth="4" />
            <path d="M1122 612.500L1162 637 1122 669z" fill="#f4f4f4" fillOpacity="0.7" stroke="#efefef" strokeWidth="5" />
            <path d="M1122 655V612.500L1162 635" stroke="#fff" strokeWidth="3.500" />
            <path d="M1130 625v26l19-14z" fill="#fff" stroke="#e2e2e2" strokeWidth="1.500" />
          </g>
        </Watermark>
      </Screen>
    </>
  );
}
